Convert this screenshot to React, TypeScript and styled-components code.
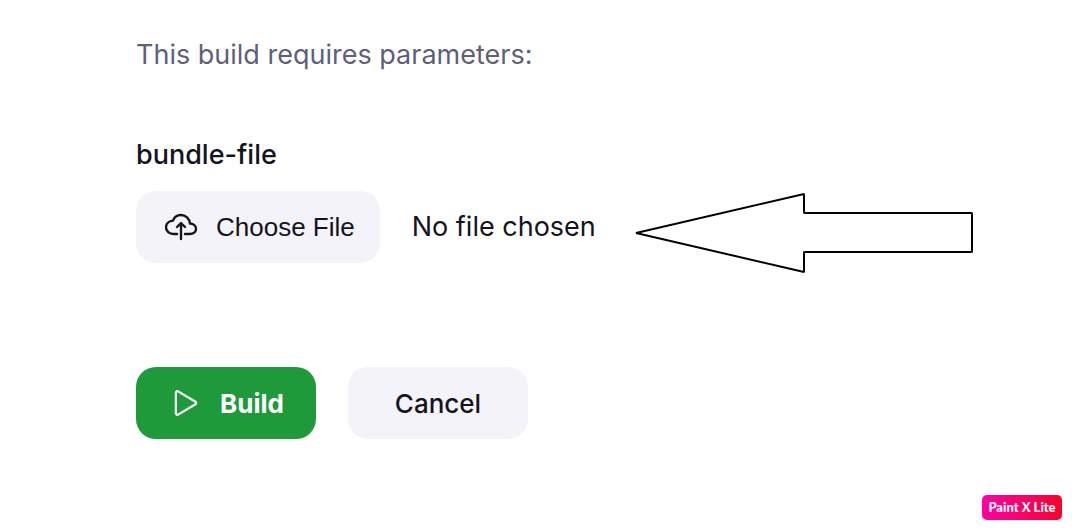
import { useRef, useState } from "react";
import styled, { createGlobalStyle } from "styled-components";
import { IoCloudUploadOutline, IoPlayOutline } from "react-icons/io5";

const GlobalStyle = createGlobalStyle`
  * {
    box-sizing: border-box;
  }
  body {
    margin: 0;
    background: #fff;
    color: #14141f;
    font-family: Inter, "Liberation Sans", sans-serif;
    font-size: 27px;
    line-height: 36px;
  }
`;

const Page = styled.main`
  min-height: 100vh;
  padding: 37px 32px 36px 136px;
`;

const Intro = styled.p`
  margin: 0 0 64px;
  color: #5f5f7c;
`;

const Field = styled.div`
  margin-bottom: 104px;
`;

const FieldLabel = styled.label`
  display: block;
  width: fit-content;
  margin-bottom: 18px;
  font-weight: 500;
`;

const FileRow = styled.div`
  position: relative;
  display: flex;
  align-items: center;
  gap: 32px;
`;

const HiddenInput = styled.input`
  position: absolute;
  width: 1px;
  height: 1px;
  opacity: 0;
  pointer-events: none;
`;

const Button = styled.button<{ $primary?: boolean }>`
  display: inline-flex;
  align-items: center;
  justify-content: center;
  gap: 16px;
  min-width: 180px;
  height: 72px;
  padding: 0 28px;
  border: 0;
  border-radius: 20px;
  background: ${(p) => (p.$primary ? "#1f9a3a" : "#f4f3f9")};
  color: ${(p) => (p.$primary ? "#fff" : "#14141f")};
  font-family: inherit;
  font-size: 26px;
  font-weight: ${(p) => (p.$primary ? 700 : 500)};
  cursor: pointer;
`;

const FileButton = styled(Button)`
  gap: 19px;
  padding: 0 25px 0 29px;
  font-family: "Liberation Sans", Arial, sans-serif;
  font-weight: 400;

  svg * {
    stroke-width: 38px;
  }
`;

const Actions = styled.div`
  display: flex;
  gap: 32px;
`;

const ArrowNote = styled.svg`
  position: absolute;
  left: 499px;
  top: 1px;
  overflow: visible;
`;

const Watermark = styled.div`
  position: fixed;
  right: 10px;
  bottom: 8px;
  width: 80px;
  border-radius: 5px;
  background: linear-gradient(90deg, #ff00a6, #f9002b);
  color: #fff;
  font-family: Lato, sans-serif;
  font-size: 13px;
  font-weight: 900;
  line-height: 25px;
  text-align: center;
`;

export default function App() {
  const input = useRef<HTMLInputElement>(null);
  const [fileName, setFileName] = useState("No file chosen");

  return (
    <>
      <GlobalStyle />
      <Page>
        <Intro>This build requires parameters:</Intro>
        <Field>
          <FieldLabel htmlFor="bundle-file">bundle-file</FieldLabel>
          <FileRow>
            <HiddenInput
              ref={input}
              id="bundle-file"
              type="file"
              tabIndex={-1}
              onChange={(e) => setFileName(e.target.files?.[0]?.name ?? "No file chosen")}
            />
            <FileButton type="button" onClick={() => input.current?.click()}>
              <IoCloudUploadOutline size={32} aria-hidden />
              Choose File
            </FileButton>
            <span>{fileName}</span>
            <ArrowNote width="340" height="82" viewBox="0 0 340 82" aria-hidden>
              <path
                d="M1 41L169 2V21H337V60H169V80Z"
                fill="#fff"
                stroke="#000"
                strokeWidth="2"
                strokeLinejoin="bevel"
              />
            </ArrowNote>
          </FileRow>
        </Field>
        <Actions>
          <Button type="button" $primary>
            <IoPlayOutline size={36} aria-hidden />
            Build
          </Button>
          <Button type="button">Cancel</Button>
        </Actions>
      </Page>
      <Watermark>Paint X Lite</Watermark>
    </>
  );
}
